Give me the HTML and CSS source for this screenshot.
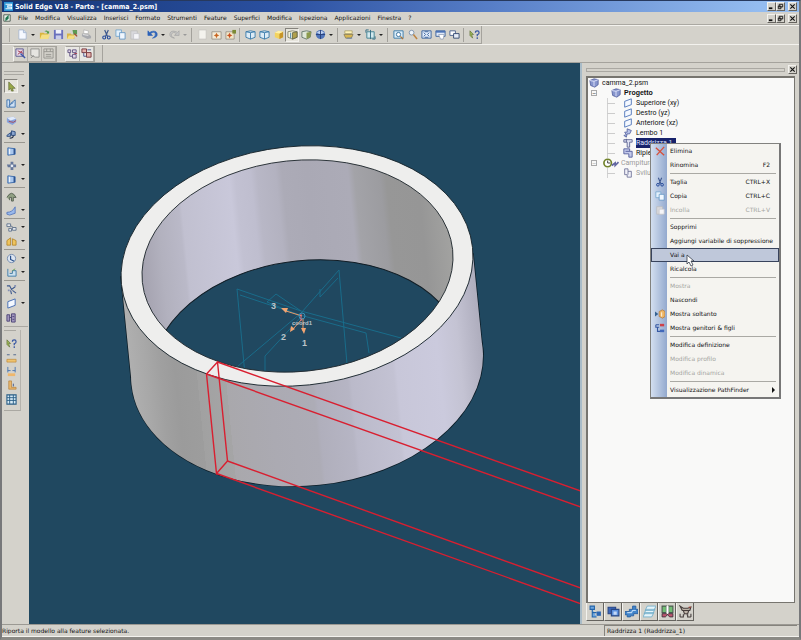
FILE: index.html
```html
<!DOCTYPE html>
<html lang="it">
<head>
<meta charset="utf-8">
<title>Solid Edge V18 - Parte - [camma_2.psm]</title>
<link rel="stylesheet" href="styles.css">
</head>
<body>
<svg class="defs" aria-hidden="true">
  <symbol id="new" viewBox="0 0 12 12"><path d="M2 1h5l3 3v7H2z" fill="#f6f9ff" stroke="#9db0cc" stroke-width=".8"/><path d="M7 1v3h3" fill="#cfdcf2" stroke="#9db0cc" stroke-width=".8"/></symbol>
  <symbol id="open" viewBox="0 0 12 12"><path d="M1 4h4l1 1h4v6H1z" fill="#d9b53c"/><path d="M3 6h9l-2 5H1z" fill="#f3df86"/><path d="M6 3q2-3 4 0l1-1v3H8l1-1q-1-2-3-1" fill="#4e9b46"/></symbol>
  <symbol id="save" viewBox="0 0 12 12"><path d="M1 1h10v10H1z" fill="#6a70bd"/><path d="M3 1h6v4H3z" fill="#eef0fa"/><path d="M3 7h6v4H3z" fill="#c9cde9"/></symbol>
  <symbol id="import" viewBox="0 0 12 12"><path d="M0 5h4l1 1h3v5H0z" fill="#d8b446"/><path d="M2 7h7l-2 4H0z" fill="#f4dd80"/><path d="M6 1h5v5H7z" fill="#5d9a52"/><path d="M8 5l3 3" stroke="#a5462c" stroke-width="1.4"/></symbol>
  <symbol id="print" viewBox="0 0 12 12"><path d="M3 1l5 1v3H3z" fill="#fff" stroke="#aaa" stroke-width=".7"/><path d="M1 5l8 1 2 2v2l-4 1-6-3z" fill="#a7a9ae"/><path d="M2 6l6 1" stroke="#e6e6e6"/></symbol>
  <symbol id="cut" viewBox="0 0 12 12"><path d="M4 1l3 7M8 1L5 8" stroke="#3c568d" stroke-width="1.3" fill="none"/><circle cx="3.5" cy="9.3" r="1.6" fill="none" stroke="#24499b" stroke-width="1.2"/><circle cx="8.5" cy="9.3" r="1.6" fill="none" stroke="#24499b" stroke-width="1.2"/></symbol>
  <symbol id="copy" viewBox="0 0 12 12"><path d="M1 1h6v7H1z" fill="#e3f0fb" stroke="#6fa3cc" stroke-width=".9"/><path d="M5 4h6v7H5z" fill="#f0f7fe" stroke="#5c92c2" stroke-width=".9"/></symbol>
  <symbol id="paste" viewBox="0 0 12 12"><path d="M2 2h7v9H2z" fill="#d8d8dc" stroke="#bbb" stroke-width=".8"/><path d="M5 5h6v6H5z" fill="#f5f5f8" stroke="#c3c3c9" stroke-width=".8"/></symbol>
  <symbol id="undo" viewBox="0 0 12 12"><path d="M1 2v5h5L4 5q4-3 5 0t-3 5q6-1 5-5T4 3L3 4z" fill="#2c62b8" stroke="#2c62b8" stroke-width=".7"/></symbol>
  <symbol id="redo" viewBox="0 0 12 12"><path d="M11 2v5H6l2-2Q5 2 3 5t3 5Q0 9 1 5t7-2l1 1z" fill="#c6c6c6" stroke="#999" stroke-width=".6"/></symbol>
  <symbol id="page" viewBox="0 0 12 12"><path d="M2 1h8v10H2z" fill="#f4f3ee" stroke="#c4c3bd" stroke-width=".8"/></symbol>
  <symbol id="spark" viewBox="0 0 12 12"><path d="M1 3h10v8H1z" fill="#f3ead6" stroke="#8d887e" stroke-width=".8"/><path d="M6 4l1 2 2 1-2 1-1 2-1-2-2-1 2-1z" fill="#c8641f"/></symbol>
  <symbol id="spark2" viewBox="0 0 12 12"><path d="M1 3h9v8H1z" fill="#f1e4c6" stroke="#8d887e" stroke-width=".8"/><path d="M5 4l1 2 2 1-2 1-1 2-1-2-2-1 2-1z" fill="#c8501f"/><path d="M8 1h4v4H8z" fill="#7c8a35"/></symbol>
  <symbol id="cube" viewBox="0 0 12 12"><path d="M1 3l5-1 5 1v6l-5 2-5-2z" fill="#dcebf6" stroke="#3b7cab" stroke-width="1"/><path d="M1 3l5 1 5-1M6 4v7" fill="none" stroke="#3b7cab"/></symbol>
  <symbol id="cubey" viewBox="0 0 12 12"><path d="M2 4l4-2 5 1v6l-4 2-5-2z" fill="#f3d35f"/><path d="M7 5l4-2v6l-4 2z" fill="#c79528"/><path d="M2 4l4-2 5 1-4 2z" fill="#fff1a9"/></symbol>
  <symbol id="cubeh" viewBox="0 0 12 12"><path d="M1 3l5-1 5 1v6l-5 2-5-2z" fill="#f3f1d8" stroke="#7b7c62" stroke-width=".9"/><path d="M6 4l5-1v6l-5 2z" fill="#b1a14b" stroke="#5c6041" stroke-width=".8"/><path d="M4 4v6" stroke="#3b7cab"/></symbol>
  <symbol id="cubeg" viewBox="0 0 12 12"><path d="M1 3l5-1 5 1-1 6-4 2-5-2z" fill="#dfe8d8" stroke="#5b6f62" stroke-width=".9"/><path d="M6 4l5-1-1 6-4 2z" fill="#8b9a4c"/></symbol>
  <symbol id="sphere" viewBox="0 0 12 12"><circle cx="6" cy="6" r="5" fill="#4f74ba"/><path d="M2 4q4-4 8 0L6 6z" fill="#bfd1f0"/><path d="M6 1v10M1 6h10" stroke="#263f7b" stroke-width="1"/></symbol>
  <symbol id="layers" viewBox="0 0 12 12"><path d="M2 2h8v3H2z" fill="#fff3ba" stroke="#a59a62" stroke-width=".8"/><path d="M1 6h10l-2 4H3z" fill="#d8b752" stroke="#857952" stroke-width=".8"/><path d="M4 10h6" stroke="#6684b5"/></symbol>
  <symbol id="fitbox" viewBox="0 0 12 12"><path d="M2 3h8v7H2z" fill="#d3e9ee" stroke="#3f8092" stroke-width="1"/><path d="M6 1v10M1 1h3M1 1v3M11 11V8M11 11H8" stroke="#326c83" fill="none"/></symbol>
  <symbol id="zoomarea" viewBox="0 0 12 12"><path d="M1 2h10v8H1z" fill="#dceef9" stroke="#397aa8"/><circle cx="6" cy="6" r="2.3" fill="#fff" stroke="#356f9b"/><path d="M8 8l3 3" stroke="#ad7334" stroke-width="1.4"/></symbol>
  <symbol id="mag" viewBox="0 0 12 12"><circle cx="5" cy="4" r="2.6" fill="#eef5fb" stroke="#7c93b0"/><path d="M7 6l4 5" stroke="#bd8443" stroke-width="1.7"/></symbol>
  <symbol id="fit" viewBox="0 0 12 12"><path d="M1 2h10v8H1z" fill="#e1ecfa" stroke="#39609b"/><path d="M3 4l2 2-2 2M9 4L7 6l2 2M4 3h4M4 9h4" stroke="#39609b" fill="none"/></symbol>
  <symbol id="pan" viewBox="0 0 12 12"><path d="M1 2h10v6H1z" fill="#dfe9f8" stroke="#39609b"/><path d="M1 2h10v2H1z" fill="#4b73b7"/><path d="M4 6h6l-1 5H6z" fill="#fff" stroke="#8d9bb2" stroke-width=".8"/></symbol>
  <symbol id="rotate" viewBox="0 0 12 12"><path d="M1 2h6v5H1z" fill="#fff" stroke="#4c638e"/><path d="M5 5h6v5H5z" fill="#e6ecf7" stroke="#34496e"/></symbol>
  <symbol id="help" viewBox="0 0 12 12"><path d="M1 2l4 4-2 0 1 4-3-3z" fill="#9bb457" stroke="#54642c" stroke-width=".6"/><path d="M7 4q0-2 2-2t2 2-2 2v2M9 9v2" stroke="#3555a2" stroke-width="1.3" fill="none"/></symbol>
  <symbol id="sketch" viewBox="0 0 12 12"><path d="M1 1h8v8H1z" fill="#e6dcea" stroke="#59568e"/><path d="M3 3l6 3M3 7l5-4" stroke="#a1344c"/><path d="M6 6l5 5" stroke="#3c55a8" stroke-width="1.6"/></symbol>
  <symbol id="corner" viewBox="0 0 12 12"><path d="M2 1h9v9H7L2 8z" fill="#e6e5e1" stroke="#8a8a88" stroke-width=".9"/><path d="M2 11l3-3" stroke="#8a8a88"/></symbol>
  <symbol id="boxgrid" viewBox="0 0 12 12"><path d="M1 1h10v10H1zM1 4h10M4 1v3M8 1v3M3 7h6M3 9h6" fill="none" stroke="#96958f"/></symbol>
  <symbol id="link" viewBox="0 0 12 12"><path d="M1 2h3v3H1zM6 2h4v3H6zM6 7h4v4H6zM3 5v4h3" fill="#e3d6e6" stroke="#625783"/><path d="M8 6h3" stroke="#a1344c"/></symbol>
  <symbol id="link2" viewBox="0 0 12 12"><path d="M1 1h5v4H1zM6 5h5v5H6z" fill="#e6b1ac" stroke="#75343a"/><path d="M3 5v4h3M7 2h4" stroke="#49558f" fill="none"/></symbol>
  <symbol id="arrow" viewBox="0 0 12 12"><path d="M3 1l7 7-3 0 1 3-2 0-1-3-2 2z" fill="#98a748" stroke="#5b6430" stroke-width=".7"/></symbol>
  <symbol id="profile" viewBox="0 0 12 12"><path d="M1 2h3v8H1zM5 6l5-4v8H4" fill="#cfe0f3" stroke="#3b71ae"/><path d="M3 8l5-3" stroke="#3b71ae"/></symbol>
  <symbol id="tab" viewBox="0 0 12 12"><path d="M1 3l7-1 3 2v4l-4 3-6-3z" fill="#88a4dc"/><path d="M1 3l7-1 3 2-6 2z" fill="#e1eafa"/><path d="M3 7l5 1 3-2" stroke="#a74754" fill="none"/></symbol>
  <symbol id="flange" viewBox="0 0 12 12"><path d="M1 7l4-3v4H1zM6 2l4 1v4H6z" fill="#8aa5cf" stroke="#2e4d7f"/><path d="M4 10q4 0 4-3" stroke="#232f48" fill="none" stroke-width="1.2"/></symbol>
  <symbol id="plate" viewBox="0 0 12 12"><path d="M2 2l8 1v6l-8 1z" fill="#a9c7ed" stroke="#3969ab"/><path d="M4 3v6" stroke="#fff"/><path d="M9 3v6" stroke="#284e8b" stroke-width="1.5"/></symbol>
  <symbol id="gear" viewBox="0 0 12 12"><path d="M1 5h4V2h3v3h3v3H8v3H5V8H2z" fill="#65779a"/><circle cx="6.5" cy="6.5" r="1.5" fill="#e9edf5"/></symbol>
  <symbol id="arch" viewBox="0 0 12 12"><path d="M1 7q5-9 10 0H8v4H6V7H4v3" fill="#91a184" stroke="#4e594b" stroke-width=".9"/></symbol>
  <symbol id="ramp" viewBox="0 0 12 12"><path d="M1 8q6 0 9-6v7l-6 2-3-1z" fill="#9ab9eb" stroke="#5375bb" stroke-width=".9"/></symbol>
  <symbol id="pattern" viewBox="0 0 12 12"><path d="M1 2h4v3H1zM7 6h4v3H7zM3 7h3v3H3z" fill="#e6e9ee" stroke="#62748c"/><path d="M5 4l3 2" stroke="#62748c"/></symbol>
  <symbol id="mirror" viewBox="0 0 12 12"><path d="M1 5l4-3v8H1zM7 3l4 2v5H7z" fill="#efc45c" stroke="#ac7d21" stroke-width=".8"/></symbol>
  <symbol id="clock" viewBox="0 0 12 12"><circle cx="6" cy="6" r="4.5" fill="#dde5f1" stroke="#7289ad"/><path d="M5 3v4l4 2" stroke="#284f8a" fill="none" stroke-width="1.3"/></symbol>
  <symbol id="extent" viewBox="0 0 12 12"><path d="M2 2v8h9V4H7v3H4" fill="#cce1ee" stroke="#3f79a6"/><path d="M7 4l3-2" stroke="#6aa14e"/></symbol>
  <symbol id="dots" viewBox="0 0 12 12"><path d="M1 2h3l2 4 4-3M5 7l1 4M7 7l4 3" stroke="#3d588d" fill="none" stroke-width="1.2"/><path d="M2 6h2v2H2zM9 1h2v2H9z" fill="#8490b3"/></symbol>
  <symbol id="plane" viewBox="0 0 12 12"><path d="M2 4l8-3v7l-8 3z" fill="#f4f8ff" stroke="#426bb4"/></symbol>
  <symbol id="bars" viewBox="0 0 12 12"><path d="M1 3h3v7H1zM6 2h4v9H6z" fill="#a196be" stroke="#4d4476"/><path d="M4 6h2M7 5h2M7 8h2" stroke="#4d4476"/></symbol>
  <symbol id="dist" viewBox="0 0 12 12"><path d="M1 8h10v3H1z" fill="#efc36d" stroke="#bb8535" stroke-width=".7"/><path d="M1 3h3M8 3h3" stroke="#4c6288"/></symbol>
  <symbol id="dim" viewBox="0 0 12 12"><path d="M2 1v6M10 1v6M2 5h3M7 5h3" stroke="#4774b1"/><path d="M2 8h8v3H2z" fill="#efb76c"/></symbol>
  <symbol id="angle" viewBox="0 0 12 12"><path d="M3 1v9h8V8H6V1z" fill="#e8b66d" stroke="#b37b35" stroke-width=".7"/><path d="M8 4v3" stroke="#3d588d"/></symbol>
  <symbol id="table" viewBox="0 0 12 12"><path d="M1 1h10v10H1z" fill="#d6eaf5" stroke="#2b5f87" stroke-width="1.2"/><path d="M1 4h10M1 7h10M4 1v10M8 1v10" stroke="#2b5f87"/></symbol>
  <symbol id="part" viewBox="0 0 12 12"><path d="M1 3l5-2 5 1v6l-4 3-5-2z" fill="#8796cd" stroke="#4b5798" stroke-width=".9"/><path d="M1 3l5 1 5-2M6 4v6" stroke="#e7ebff" fill="none"/></symbol>
  <symbol id="bend" viewBox="0 0 12 12"><path d="M5 1l5 2-2 4H5l-1 4-3-2 3-1-2-3h3z" fill="#b9c4e9" stroke="#525f9e"/></symbol>
  <symbol id="unbend" viewBox="0 0 12 12"><path d="M1 2h10v3H8v6H5V5H1z" fill="#dfe3f4" stroke="#535a8b"/><path d="M4 1v4" stroke="#535a8b"/></symbol>
  <symbol id="rebend" viewBox="0 0 12 12"><path d="M1 1h7v3h3v7H7V7H1z" fill="#c4caeb" stroke="#4b5496"/><path d="M3 4h5" stroke="#4b5496"/></symbol>
  <symbol id="flat" viewBox="0 0 12 12"><path d="M2 1h4v3h4v7H5V8H2z" fill="#f0f1f9" stroke="#6a6d94"/><path d="M6 4v4" stroke="#6a6d94"/></symbol>
  <symbol id="delete" viewBox="0 0 12 12"><path d="M1 2l10 9M11 1L2 11" stroke="#d7503a" stroke-width="1.6"/></symbol>
  <symbol id="only" viewBox="0 0 12 12"><path d="M0 3l4 3-4 3z" fill="#356292"/><path d="M5 3l4-2 3 2v6l-3 2-4-2z" fill="#eeb665" stroke="#ad7132" stroke-width=".8"/><path d="M8 4v5" stroke="#fff"/></symbol>
  <symbol id="parents" viewBox="0 0 12 12"><path d="M1 2h4M1 2v3h4M3 5v5h3" fill="none" stroke="#3659a4" stroke-width="1.3"/><path d="M6 1h5v3H6z" fill="#ce4149"/><path d="M6 8h5v3H6z" fill="#4168ba"/></symbol>
  <symbol id="treei" viewBox="0 0 12 12"><path d="M1 1h4v3H1zM3 4v7h4M3 7h4" fill="#70a7df" stroke="#2465aa"/><path d="M7 6h4v4H7z" fill="#2d67b3"/></symbol>
  <symbol id="stack" viewBox="0 0 12 12"><path d="M1 2h7v6H1z" fill="#3a67bb" stroke="#284683"/><path d="M4 4h7v6H4z" fill="#5c91df" stroke="#284683"/><path d="M6 6h3v3H6z" fill="#c5d9f7"/></symbol>
  <symbol id="family" viewBox="0 0 12 12"><path d="M7 1h3v3h2v4H8v2H5v1H2V9H0V6h4V4h3z" fill="#4285ca" stroke="#285fa0" stroke-width=".8"/><path d="M2 7h4l1-2h3" stroke="#b8d8f6" fill="none"/></symbol>
  <symbol id="sheets" viewBox="0 0 12 12"><path d="M4 1h8l-2 4H2zM3 4h8l-2 4H1zM2 7h8l-2 4H0z" fill="#e6f5fb" stroke="#70adc9" stroke-width=".8"/></symbol>
  <symbol id="book" viewBox="0 0 12 12"><path d="M1 1h4v6H1zM7 1h4v6H7z" fill="#72be75" stroke="#4d5a50"/><path d="M5 1h2v7H5z" fill="#fff"/><path d="M1 11V8h4l1 1 1-1h4v3H8L6 9l-2 2z" stroke="#3a3038" fill="#c05670" stroke-width=".8"/></symbol>
  <symbol id="film" viewBox="0 0 12 12"><path d="M1 1l3 2h4l3-1-1 3H3zM4 5h5l-1 3H5z" fill="#beb4a8" stroke="#453d3b"/><path d="M1 11h3V9h1M11 11H8V9H7M1 8v3M11 8v3" fill="none" stroke="#453d3b"/><path d="M9 2h2" stroke="#b3433a"/></symbol>
  <symbol id="min" viewBox="0 0 8 8"><path d="M1 5h4v2H1z" fill="#111"/></symbol>
  <symbol id="rest" viewBox="0 0 8 8"><path d="M2.5 1.5h4v3h-4zM1.5 3.5h3v3h-3z" fill="#d4d2cb" stroke="#111"/></symbol>
  <symbol id="close" viewBox="0 0 8 8"><path d="M1.5 1.5l5 5M6.5 1.5l-5 5" stroke="#111" stroke-width="1.3"/></symbol>
</svg>

<div class="window">
  <header class="titlebar">
    <svg class="app-icon" viewBox="0 0 12 12"><rect width="12" height="12" fill="#2d94d3"/><path d="M2 3h8v2H5v2h5v2H2" fill="none" stroke="#eefaff" stroke-width="1.6"/></svg>
    <h1>Solid Edge V18 - Parte - [camma_2.psm]</h1>
    <div class="winbtns"><button aria-label="Riduci"><svg><use href="#min"/></svg></button><button aria-label="Ripristina"><svg><use href="#rest"/></svg></button><button class="close" aria-label="Chiudi"><svg><use href="#close"/></svg></button></div>
  </header>
  <nav class="menubar">
    <svg class="doc-icon" viewBox="0 0 10 10"><path d="M1 1h8v8H1z" fill="#eaf3ec" stroke="#3c4b42"/><path d="M7 1L3 5v4l4-3z" fill="#1e7651"/></svg>
    <button>File</button><button>Modifica</button><button>Visualizza</button><button>Inserisci</button><button>Formato</button><button>Strumenti</button><button>Feature</button><button>Superfici</button><button>Modifica</button><button>Ispeziona</button><button>Applicazioni</button><button>Finestra</button><button>?</button>
    <div class="winbtns"><button aria-label="Riduci documento"><svg><use href="#min"/></svg></button><button aria-label="Ripristina documento"><svg><use href="#rest"/></svg></button><button class="close" aria-label="Chiudi documento"><svg><use href="#close"/></svg></button></div>
  </nav>
  <div class="toolrow">
    <div class="toolbar">
      <i class="grip"></i>
      <button class="t" aria-label="Nuovo"><svg><use href="#new"/></svg></button><button class="drop" aria-label="Altri modelli"></button>
      <button class="t" aria-label="Apri"><svg><use href="#open"/></svg></button><button class="t" aria-label="Salva"><svg><use href="#save"/></svg></button><button class="t" aria-label="Importa"><svg><use href="#import"/></svg></button><button class="t" aria-label="Stampa"><svg><use href="#print"/></svg></button>
      <i class="sep"></i>
      <button class="t" aria-label="Taglia"><svg><use href="#cut"/></svg></button><button class="t" aria-label="Copia"><svg><use href="#copy"/></svg></button><button class="t" aria-label="Incolla"><svg><use href="#paste"/></svg></button>
      <i class="space"></i>
      <button class="t" aria-label="Annulla"><svg><use href="#undo"/></svg></button><button class="drop" aria-label="Elenco annulla"></button><button class="t" aria-label="Ripeti"><svg><use href="#redo"/></svg></button><button class="drop off" aria-label="Elenco ripeti"></button>
      <i class="sep"></i>
      <button class="t" aria-label="Pagina"><svg><use href="#page"/></svg></button><button class="t" aria-label="Aggiorna"><svg><use href="#spark"/></svg></button><button class="t" aria-label="Aggiorna tutto"><svg><use href="#spark2"/></svg></button>
      <i class="sep"></i>
      <button class="t" aria-label="Wireframe"><svg><use href="#cube"/></svg></button><button class="t" aria-label="Spigoli nascosti"><svg><use href="#cube"/></svg></button><button class="t" aria-label="Ombreggiato"><svg><use href="#cubey"/></svg></button><button class="t pressed" aria-label="Ombreggiato con spigoli"><svg><use href="#cubeh"/></svg></button><button class="t" aria-label="Ombra"><svg><use href="#cubeg"/></svg></button><button class="t" aria-label="Stile vista"><svg><use href="#sphere"/></svg></button><button class="drop" aria-label="Stili"></button>
      <i class="sep"></i>
      <button class="t" aria-label="Livelli"><svg><use href="#layers"/></svg></button><button class="drop" aria-label="Elenco livelli"></button><button class="t" aria-label="Orientamento"><svg><use href="#fitbox"/></svg></button><button class="drop" aria-label="Viste"></button>
      <i class="sep"></i>
      <button class="t" aria-label="Zoom area"><svg><use href="#zoomarea"/></svg></button><button class="t" aria-label="Zoom"><svg><use href="#mag"/></svg></button><button class="t" aria-label="Adatta"><svg><use href="#fit"/></svg></button><button class="t" aria-label="Panoramica"><svg><use href="#pan"/></svg></button><button class="t" aria-label="Ruota"><svg><use href="#rotate"/></svg></button>
      <i class="sep"></i>
      <button class="t" aria-label="Guida"><svg><use href="#help"/></svg></button>
    </div>
  </div>
  <div class="toolrow ribbon">
    <div class="toolbar">
      <div class="boxed"><button class="t" aria-label="Schizzo"><svg><use href="#sketch"/></svg></button><button class="t" aria-label="Angolo"><svg><use href="#corner"/></svg></button><button class="t" aria-label="Opzioni"><svg><use href="#boxgrid"/></svg></button></div>
      <div class="boxed light"><button class="t" aria-label="Collega"><svg><use href="#link"/></svg></button><button class="t" aria-label="Scollega"><svg><use href="#link2"/></svg></button></div>
    </div>
  </div>

  <main class="workspace">
    <aside class="sidebar">
      <div class="vbar">
        <i class="hgrip"></i>
        <div class="v first"><button class="t pressed" aria-label="Seleziona"><svg><use href="#arrow"/></svg></button><button class="drop" aria-label="Opzioni selezione"></button></div>
        <div class="v"><button class="t" aria-label="Profilo"><svg><use href="#profile"/></svg></button><button class="drop" aria-label="Altri profili"></button></div>
        <i class="hsep"></i>
        <div class="v"><button class="t" aria-label="Linguetta"><svg><use href="#tab"/></svg></button></div>
        <div class="v"><button class="t" aria-label="Lembo"><svg><use href="#flange"/></svg></button><button class="drop" aria-label="Altri lembi"></button></div>
        <i class="hsep"></i>
        <div class="v"><button class="t" aria-label="Piastra"><svg><use href="#plate"/></svg></button></div>
        <div class="v"><button class="t" aria-label="Foro"><svg><use href="#gear"/></svg></button><button class="drop" aria-label="Altri fori"></button></div>
        <div class="v"><button class="t" aria-label="Taglio"><svg><use href="#plate"/></svg></button><button class="drop" aria-label="Altri tagli"></button></div>
        <i class="hsep"></i>
        <div class="v"><button class="t" aria-label="Imbutitura"><svg><use href="#arch"/></svg></button></div>
        <div class="v"><button class="t" aria-label="Smusso"><svg><use href="#ramp"/></svg></button><button class="drop" aria-label="Altri smussi"></button></div>
        <i class="hsep"></i>
        <div class="v"><button class="t" aria-label="Serie"><svg><use href="#pattern"/></svg></button><button class="drop" aria-label="Altre serie"></button></div>
        <div class="v"><button class="t" aria-label="Specchio"><svg><use href="#mirror"/></svg></button><button class="drop" aria-label="Altri specchi"></button></div>
        <i class="hsep"></i>
        <div class="v"><button class="t" aria-label="Curva"><svg><use href="#clock"/></svg></button><button class="drop" aria-label="Altre curve"></button></div>
        <div class="v"><button class="t" aria-label="Estensione"><svg><use href="#extent"/></svg></button><button class="drop" aria-label="Altre estensioni"></button></div>
        <i class="hsep"></i>
        <div class="v"><button class="t" aria-label="Sistema di coordinate"><svg><use href="#dots"/></svg></button></div>
        <div class="v"><button class="t" aria-label="Piano"><svg><use href="#plane"/></svg></button><button class="drop" aria-label="Altri piani"></button></div>
        <div class="v"><button class="t" aria-label="Variabili"><svg><use href="#bars"/></svg></button></div>
      </div>
      <div class="vbar second">
        <i class="hgrip"></i>
        <div class="v"><button class="t" aria-label="Informazioni"><svg><use href="#help"/></svg></button></div>
        <div class="v"><button class="t" aria-label="Distanza"><svg><use href="#dist"/></svg></button></div>
        <div class="v"><button class="t" aria-label="Distanza minima"><svg><use href="#dim"/></svg></button></div>
        <div class="v"><button class="t" aria-label="Angolo misurato"><svg><use href="#angle"/></svg></button></div>
        <div class="v"><button class="t" aria-label="Tabella"><svg><use href="#table"/></svg></button></div>
      </div>
    </aside>

    <section class="viewport">
      <svg viewBox="29 63 551 561" preserveAspectRatio="xMidYMid slice" role="img" aria-label="Modello camma_2">
        <defs>
          <linearGradient id="outer" gradientUnits="userSpaceOnUse" x1="124" y1="360" x2="478" y2="325">
            <stop offset="0" stop-color="#b2b2b2"/><stop offset=".06" stop-color="#a8a8a8"/><stop offset=".1" stop-color="#a0a0a0"/><stop offset=".14" stop-color="#9b9b9b"/><stop offset=".2" stop-color="#9d9d9d"/><stop offset=".2" stop-color="#a1a1a1"/><stop offset=".28" stop-color="#a5a5a6"/><stop offset=".28" stop-color="#a9a8ac"/><stop offset=".4" stop-color="#abaab2"/><stop offset=".52" stop-color="#adacb6"/><stop offset=".53" stop-color="#b0afbc"/><stop offset=".62" stop-color="#b6b5c4"/><stop offset=".63" stop-color="#bbbaca"/><stop offset=".75" stop-color="#c3c2d3"/><stop offset=".76" stop-color="#c8c7d9"/><stop offset=".88" stop-color="#cbcadd"/><stop offset=".94" stop-color="#c4c3d3"/><stop offset="1" stop-color="#b0afbf"/>
          </linearGradient>
          <linearGradient id="inner" gradientUnits="userSpaceOnUse" x1="142" y1="250" x2="453" y2="219">
            <stop offset="0" stop-color="#a6a4b1"/><stop offset=".06" stop-color="#b2b1be"/><stop offset=".13" stop-color="#bab9c8"/><stop offset=".14" stop-color="#c1c0d0"/><stop offset=".3" stop-color="#c9c8da"/><stop offset=".32" stop-color="#c2c1d2"/><stop offset=".37" stop-color="#bfbecf"/><stop offset=".39" stop-color="#b8b7c6"/><stop offset=".45" stop-color="#b3b2c0"/><stop offset=".47" stop-color="#acabb7"/><stop offset=".55" stop-color="#aaa9b5"/><stop offset=".68" stop-color="#acabb7"/><stop offset=".7" stop-color="#a3a3a8"/><stop offset=".78" stop-color="#9c9ca0"/><stop offset=".8" stop-color="#979797"/><stop offset=".9" stop-color="#969696"/><stop offset="1" stop-color="#a4a4a2"/>
          </linearGradient>
          <clipPath id="hole"><ellipse cx="297.5" cy="266" rx="156" ry="105.5" transform="rotate(-6 297.5 266)"/></clipPath>
          <clipPath id="body"><ellipse cx="307" cy="366" rx="176.5" ry="119.5" transform="rotate(-6 307 366)"/><path d="M121 277l10 100L483 354l-10-100z"/></clipPath>
        </defs>
        <path fill="#204860" d="M-400-400h1600v1600H-400z"/>
        <g fill="none" stroke="#0c1c26" stroke-width="1.5">
          <ellipse cx="307" cy="366" rx="176.5" ry="119.5" transform="rotate(-6 307 366)"/>
          <path d="M121 277l10 100L483 354l-10-100z"/>
        </g>
        <path clip-path="url(#body)" fill="url(#outer)" d="M110 240h390v260H110z"/>
        <ellipse cx="297" cy="266" rx="176.5" ry="119.5" transform="rotate(-6 297 266)" fill="#eeeeed" stroke="#17242c" stroke-width=".9"/>
        <g clip-path="url(#hole)">
          <path fill="url(#inner)" d="M130 150h340v240H130z"/>
          <ellipse cx="307.5" cy="366" rx="156" ry="105.5" transform="rotate(-6 307.5 366)" fill="#204860" stroke="#111d25"/>
          <g fill="none" stroke="#18708f" stroke-width=".9">
            <path d="M237 289l64 22 100 27M237 289l8 86M240 295l60 20 66 18 3 20M339 270l8 94M339 270l-38 43-76 64M338 278l-18 19v-8M301 317l-36 39v20M301 311l-25-17-9 8M267 302l34 14"/>
          </g>
        </g>
        <ellipse cx="297.5" cy="266" rx="156" ry="105.5" transform="rotate(-6 297.5 266)" fill="none" stroke="#222a30" stroke-width=".9"/>
        <g stroke="#ec9967" fill="#f2a572"><path d="M302 316l-16-5M302 319l-9 10M303 318v13"/><path d="M281 308l7 0-2 5zM290 332l1-6 4 3zM301 328h5l-2 6z" stroke="none"/></g>
        <circle cx="302" cy="316" r="3" fill="none" stroke="#3793bc"/><path d="M301 314v7" stroke="#e56b7c"/>
        <g class="axis"><text x="271" y="309">3</text><text x="281" y="340">2</text><text x="302" y="346">1</text><text class="coord" x="292" y="325">coord1</text></g>
        <g fill="none" stroke="#d91f30" stroke-width="1.4"><path d="M217.5 362L206.5 374l10 99.5L227.5 461z"/><path d="M217.5 362L800 569M206.5 374L800 585M227.5 461L800 667M216.5 473.5L800 682"/></g>
      </svg>
    </section>

    <aside class="panel">
      <div class="panel-head"><i></i><button aria-label="Chiudi pannello"><svg><use href="#close"/></svg></button></div>
      <div class="treebox">
        <ul class="tree">
          <li><svg><use href="#part"/></svg><span>camma_2.psm</span></li>
          <li class="l1"><b class="box">−</b><svg><use href="#part"/></svg><strong>Progetto</strong></li>
          <li class="l2"><svg><use href="#plane"/></svg><span>Superiore (xy)</span></li>
          <li class="l2"><svg><use href="#plane"/></svg><span>Destro (yz)</span></li>
          <li class="l2"><svg><use href="#plane"/></svg><span>Anteriore (xz)</span></li>
          <li class="l2"><svg><use href="#bend"/></svg><span>Lembo 1</span></li>
          <li class="l2"><svg><use href="#unbend"/></svg><span class="sel">Raddrizza 1</span></li>
          <li class="l2"><svg><use href="#rebend"/></svg><span>Ripiega 1</span></li>
          <li class="l1 dim"><b class="box">−</b><svg class="wide" viewBox="0 0 20 12"><circle cx="6" cy="6" r="4.5" fill="#fff" stroke="#71832c" stroke-width="2"/><path d="M6 3v3h3" fill="none" stroke="#222"/><path d="M11 9l4-3v3l4-4" fill="none" stroke="#6267a2" stroke-width="2"/></svg><span>Campitura</span></li>
          <li class="l2 dim"><svg><use href="#flat"/></svg><span>Sviluppo</span></li>
        </ul>
        <div class="context" role="menu">
          <button role="menuitem"><svg><use href="#delete"/></svg><span>Elimina</span></button>
          <button role="menuitem"><span>Rinomina</span><kbd>F2</kbd></button>
          <hr>
          <button role="menuitem"><svg><use href="#cut"/></svg><span>Taglia</span><kbd>CTRL+X</kbd></button>
          <button role="menuitem"><svg><use href="#copy"/></svg><span>Copia</span><kbd>CTRL+C</kbd></button>
          <button role="menuitem" disabled><svg><use href="#paste"/></svg><span>Incolla</span><kbd>CTRL+V</kbd></button>
          <hr>
          <button role="menuitem"><span>Sopprimi</span></button>
          <button role="menuitem"><span>Aggiungi variabile di soppressione</span></button>
          <button role="menuitem" class="hot"><span>Vai a</span><svg class="cursor" viewBox="0 0 9 13"><path d="M1 1v9l2-2 2 4 2-1-2-4h3z" fill="#fff" stroke="#343b48" stroke-width=".8"/></svg></button>
          <button role="menuitem"><span>Ricalcola</span></button>
          <hr>
          <button role="menuitem" disabled><span>Mostra</span></button>
          <button role="menuitem"><span>Nascondi</span></button>
          <button role="menuitem"><svg><use href="#only"/></svg><span>Mostra soltanto</span></button>
          <button role="menuitem"><svg><use href="#parents"/></svg><span>Mostra genitori &amp; figli</span></button>
          <hr>
          <button role="menuitem"><span>Modifica definizione</span></button>
          <button role="menuitem" disabled><span>Modifica profilo</span></button>
          <button role="menuitem" disabled><span>Modifica dinamica</span></button>
          <hr>
          <button role="menuitem"><span>Visualizzazione PathFinder</span><i class="more"></i></button>
        </div>
      </div>
      <div class="tabs">
        <button class="on" aria-label="PathFinder"><svg><use href="#treei"/></svg></button><button aria-label="Libreria feature"><svg><use href="#stack"/></svg></button><button aria-label="Famiglia di parti"><svg><use href="#family"/></svg></button><button aria-label="Livelli pannello"><svg><use href="#sheets"/></svg></button><button aria-label="Sensori"><svg><use href="#book"/></svg></button><button aria-label="Riproduzione feature"><svg><use href="#film"/></svg></button>
      </div>
    </aside>
  </main>
  <footer class="status"><span>Riporta il modello alla feature selezionata.</span><span class="cell">Raddrizza 1 (Raddrizza_1)</span></footer>
</div>
</body>
</html>
```

FILE: styles.css
```css
* { box-sizing: border-box; }

:root {
  --face: #d4d2cb;
  --dark: #85837d;
  --light: #f3f2ee;
  --ui: "DejaVu Sans", sans-serif;
}

body {
  margin: 0;
  background: var(--face);
  color: #111;
  font: 6px/10px var(--ui);
}

button {
  margin: 0;
  padding: 0;
  border: 0;
  background: none;
  color: inherit;
  font: inherit;
}

svg { display: block; flex: none; }
.defs { position: absolute; width: 0; height: 0; }

.window {
  display: flex;
  flex-direction: column;
  min-height: 100vh;
  border: solid #77787a;
  border-width: 1px 2px 3px 2px;
  border-top-color: #27395e;
  border-bottom-color: #8b8a85;
}

.titlebar {
  display: flex;
  align-items: center;
  height: 11px;
  padding: 0 2px;
  background: linear-gradient(90deg, #153676, #2b50a0 35%, #587fc8 62%, #94bcf0 95%);
  color: #fff;
}

.titlebar h1 { margin: 0 0 0 2px; font: bold 7px/10px "DejaVu Sans Condensed", "DejaVu Sans", sans-serif; }
.app-icon { width: 9px; height: 9px; }

.menubar {
  display: flex;
  align-items: center;
  height: 13px;
  padding: 0 2px 0 1px;
  border-bottom: 1px solid #aaa8a2;
}

.menubar > button { margin-left: 7px; }
.doc-icon { width: 8px; height: 8px; }

.winbtns { display: flex; margin-left: auto; }

.winbtns button,
.panel-head button {
  width: 9px;
  height: 9px;
  border: 1px solid;
  border-color: var(--light) #65635e #65635e var(--light);
  background: var(--face);
}

.winbtns button.close { margin-left: 3px; }
.winbtns svg, .panel-head svg { width: 7px; height: 7px; }

.toolrow {
  display: flex;
  height: 19px;
  border-top: 1px solid var(--light);
}

.toolbar {
  display: flex;
  align-items: center;
  padding-left: 5px;
  border-right: 1px solid #a5a39d;
  border-bottom: 1px solid #a5a39d;
}

.grip { width: 3px; height: 14px; margin-right: 5px; border: solid #aaa8a2; border-width: 0 1px 0 0; }
.sep { width: 1px; height: 14px; margin: 0 3px 0 2px; background: #a3a19b; }
.space { width: 4px; }

.t {
  display: flex;
  align-items: center;
  justify-content: center;
  width: 14px;
  height: 14px;
}

.t svg { width: 11px; height: 11px; }

.t.pressed {
  border: 1px solid;
  border-color: var(--dark) var(--light) var(--light) var(--dark);
  background: #e6e4dc;
}

.drop { display: flex; align-items: center; justify-content: center; width: 8px; height: 14px; }
.drop::before { content: ""; border: 2px solid transparent; border-top-color: #222; border-bottom: 0; }
.drop.off::before { border-top-color: #999; }

.ribbon { border-bottom: 1px solid #a5a39d; }
.ribbon .toolbar { gap: 8px; padding: 0 7px 0 11px; border-bottom: 0; }
.boxed { display: flex; border: 1px solid #a5a39d; border-left-color: var(--light); }
.boxed .t { border-right: 1px solid #b1afa9; }
.boxed.light { background: #e8e7e3; }

.workspace { display: flex; flex: 1; }

.sidebar { width: 27px; padding: 7px 1px 0 2px; }
.vbar { padding-bottom: 2px; border-bottom: 1px solid #aaa8a2; }
.vbar.second { width: 17px; padding-bottom: 4px; border-right: 1px solid #b5b3ad; }
.hgrip { display: block; height: 4px; margin: 1px 4px 4px 0; border: solid #aaa8a2; border-width: 1px 0; }
.second .hgrip { height: 2px; border-bottom: 0; margin-top: 3px; }
.v { display: flex; }
.v.first { margin-bottom: 3px; }
.v .drop { margin-left: 1px; }
.hsep { display: block; height: 1px; margin: 1px 3px 1px 0; background: #999790; }

.viewport { position: relative; flex: 1; min-width: 0; background: #204860; }
.viewport > svg { position: absolute; width: 100%; height: 100%; }
.axis { fill: #bcc4ca; font: bold 9px "Liberation Sans", sans-serif; }
.axis .coord { font-size: 6px; }

.panel {
  display: flex;
  flex-direction: column;
  width: 219px;
  padding: 2px 4px 3px 4px;
  border-left: 2px solid #a9bcc8;
}

.panel-head { display: flex; align-items: center; gap: 3px; height: 9px; margin: 0 -2px 2px 0; }
.panel-head i { flex: 1; height: 4px; border: 1px solid #aaa8a2; }

.treebox {
  position: relative;
  flex: 1;
  border: solid #77756f;
  border-width: 2px 1px 1px 2px;
  background: #f9f9f8;
  font-family: Roboto, "Liberation Sans", sans-serif;
  font-size: 7px;
}

.tree { margin: 0; padding: 0 0 0 1px; list-style: none; }
.tree li { display: flex; align-items: center; gap: 3px; height: 10px; white-space: nowrap; }
.tree strong { font-family: "Liberation Sans", sans-serif; }
.tree svg { width: 10px; height: 10px; }
.tree .wide { width: 18px; height: 10px; margin-right: -2px; }
.tree .l1 { padding-left: 2px; }
.tree .l1 svg { margin-left: 11px; }
.tree .l1 .wide { margin-left: 2px; }
.tree .l2 { padding-left: 34px; background: linear-gradient(#ccc, #ccc) 18px 50% / 8px 1px no-repeat, linear-gradient(#d2d2d2, #d2d2d2) 18px 0 / 1px 10px no-repeat; }
.tree .dim { color: #999; }
.box { width: 6px; height: 6px; border: 1px solid #aaa; font: 5px/4px var(--ui); text-align: center; }
.sel { padding-right: 3px; background: #17226b; color: #dfe4ff; }

.context {
  position: absolute;
  top: 65px;
  left: 62px;
  width: 131px;
  border: 1px solid #82827f;
  border-right: 2px solid #777;
  border-bottom: 2px solid #777;
  background: linear-gradient(90deg, #d3dff0, #93a9ce 16px, #f5f4f0 16px);
  font-family: var(--ui);
  font-size: 6px;
}

.context button {
  position: relative;
  display: flex;
  align-items: center;
  width: 100%;
  height: 14px;
  padding: 0 9px 0 19px;
  white-space: nowrap;
}

.context button > svg:not(.cursor) { width: 10px; height: 10px; margin: 0 5px 0 -15px; }
.context kbd { margin-left: auto; font: inherit; }
.context button:disabled { color: #a4a4a0; }
.context .hot { border: 1px solid #38435c; background: #bfc8da; padding-left: 18px; }
.context hr { height: 1px; margin: 1px 3px 1px 19px; border: 0; background: #aaa9a4; }
.cursor { position: absolute; top: 5px; left: 34px; z-index: 1; width: 9px; height: 13px; }
.more { margin: 0 -5px 0 auto; border: 3px solid transparent; border-left-color: #111; border-right: 0; }

.tabs { display: flex; height: 18px; }
.tabs button {
  display: flex;
  align-items: center;
  justify-content: center;
  width: 18px;
  border: solid;
  border-width: 0 1px 1px 1px;
  border-color: var(--light) #65635e #65635e var(--light);
}
.tabs svg { width: 13px; height: 13px; }

.status {
  display: flex;
  align-items: center;
  height: 13px;
  border-top: 1px solid #9b9993;
  border-bottom: 1px solid var(--light);
}

.status span { flex: 1; }
.status .cell { flex: none; width: 193px; margin-right: 2px; padding-left: 2px; border-left: 1px solid var(--dark); border-top: 1px solid var(--dark); }
```
